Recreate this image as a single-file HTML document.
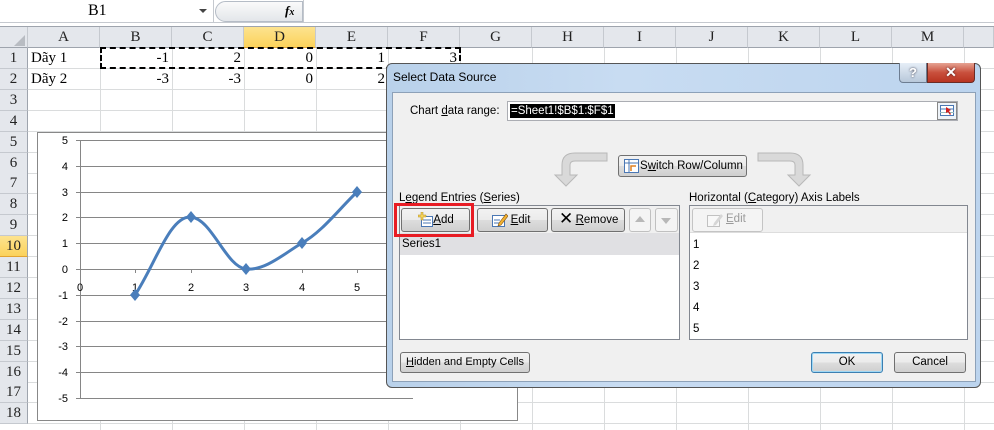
<!DOCTYPE html>
<html><head><meta charset="utf-8">
<style>
*{margin:0;padding:0;box-sizing:border-box}
body{width:994px;height:430px;overflow:hidden;background:#fff;position:relative;font-family:"Liberation Serif",serif}
.a{position:absolute;white-space:nowrap}
.ch{position:absolute;top:27px;height:21px;background:#e4e7ec;border-right:1px solid #c5c9cf;border-bottom:1px solid #9ea4ad;font-size:15px;text-align:center;line-height:21px;color:#222}
.rh{position:absolute;left:0;width:28px;background:#e4e7ec;border-bottom:1px solid #c5c9cf;border-right:1px solid #9ea4ad;font-size:15px;text-align:center;color:#222}
.vl{position:absolute;top:48px;width:1px;height:382px;background:#dadcdd}
.hl{position:absolute;left:28px;width:966px;height:1px;background:#dadcdd}
.c{position:absolute;font-size:15px;height:21px;line-height:21px;color:#000}
.d{font-family:"Liberation Sans","DejaVu Sans",sans-serif;font-size:11.5px;color:#000}
.btn{position:absolute;white-space:nowrap;border:1px solid #707070;border-radius:3px;background:linear-gradient(#f2f2f2,#ebebeb 50%,#dddddd 51%,#cfcfcf);font-family:"Liberation Sans",sans-serif;font-size:11.5px;text-align:center;color:#000}
u{text-decoration:underline}
</style></head><body>
<div class="a" style="left:0;top:0;width:994px;height:23px;background:#fff;border-bottom:1px solid #c5c9cf"></div>
<div class="a" style="left:0;top:0;width:214px;height:23px;border-right:1px solid #c5c9cf"></div>
<div class="a" style="left:88px;top:2px;font-size:16px">B1</div>
<div class="a" style="left:199px;top:9px;width:0;height:0;border-left:4px solid transparent;border-right:4px solid transparent;border-top:4px solid #444"></div>
<div class="a" style="left:215px;top:1px;width:88px;height:21px;border:1px solid #b5bcc6;border-radius:11px 0 0 11px;background:linear-gradient(#fafafa,#e3e6ea)"></div>
<div class="a" style="left:285px;top:3px;font-size:13px;font-style:italic;font-weight:bold">f<span style="font-size:10px">x</span></div>
<div class="a" style="left:303px;top:0;width:1px;height:23px;background:#c5c9cf"></div>
<div class="a" style="left:0;top:23px;width:994px;height:4px;background:#fff;border-bottom:1px solid #9ea4ad"></div>
<div class="ch" style="left:0;width:28px"></div>
<div class="a" style="left:14px;top:35px;width:0;height:0;border-left:11px solid transparent;border-bottom:11px solid #b8bcc2"></div>
<div class="ch" style="left:28px;width:72px">A</div>
<div class="ch" style="left:100px;width:72px">B</div>
<div class="ch" style="left:172px;width:72px">C</div>
<div class="ch" style="left:244px;width:72px;background:linear-gradient(#fde38f,#fbd25b);border-bottom:1px solid #e2a331">D</div>
<div class="ch" style="left:316px;width:72px">E</div>
<div class="ch" style="left:388px;width:72px">F</div>
<div class="ch" style="left:460px;width:72px">G</div>
<div class="ch" style="left:532px;width:72px">H</div>
<div class="ch" style="left:604px;width:72px">I</div>
<div class="ch" style="left:676px;width:72px">J</div>
<div class="ch" style="left:748px;width:72px">K</div>
<div class="ch" style="left:820px;width:72px">L</div>
<div class="ch" style="left:892px;width:72px">M</div>
<div class="ch" style="left:964px;width:30px"></div>
<div class="vl" style="left:100px"></div><div class="vl" style="left:172px"></div><div class="vl" style="left:244px"></div><div class="vl" style="left:316px"></div><div class="vl" style="left:388px"></div><div class="vl" style="left:460px"></div><div class="vl" style="left:532px"></div><div class="vl" style="left:604px"></div><div class="vl" style="left:676px"></div><div class="vl" style="left:748px"></div><div class="vl" style="left:820px"></div><div class="vl" style="left:892px"></div><div class="vl" style="left:964px"></div>
<div id="rows"></div>
<script>
(function(){var h='';for(var i=1;i<=18;i++){var t=48+(i-1)*20.9;var bg=i==10?'background:linear-gradient(#fde38f,#fbd25b);border-bottom-color:#e2a331;':'';h+='<div class="rh" style="top:'+t+'px;height:21px;line-height:21px;'+bg+'">'+i+'</div><div class="hl" style="top:'+(t+20)+'px"></div>';}document.getElementById('rows').innerHTML=h;})();
</script>
<div class="c" style="left:31px;top:48px">Dãy 1</div>
<div class="c" style="left:31px;top:69px">Dãy 2</div>
<div class="c" style="left:100px;top:48px;width:69px;text-align:right">-1</div>
<div class="c" style="left:172px;top:48px;width:69px;text-align:right">2</div>
<div class="c" style="left:244px;top:48px;width:69px;text-align:right">0</div>
<div class="c" style="left:316px;top:48px;width:69px;text-align:right">1</div>
<div class="c" style="left:388px;top:48px;width:69px;text-align:right">3</div>
<div class="c" style="left:100px;top:69px;width:69px;text-align:right">-3</div>
<div class="c" style="left:172px;top:69px;width:69px;text-align:right">-3</div>
<div class="c" style="left:244px;top:69px;width:69px;text-align:right">0</div>
<div class="c" style="left:316px;top:69px;width:69px;text-align:right">2</div>
<div class="a" style="left:100px;top:47px;width:361px;height:22px;border:2px dashed #000"></div>
<svg class="a" style="left:0;top:0" width="994" height="430">
<rect x="37.5" y="132.5" width="480" height="288" fill="#fff" stroke="#888"/>
<g stroke="#868686" stroke-width="1">
<line x1="76" y1="140.5" x2="413" y2="140.5"/><line x1="76" y1="166.5" x2="413" y2="166.5"/><line x1="76" y1="192.5" x2="413" y2="192.5"/><line x1="76" y1="217.5" x2="413" y2="217.5"/><line x1="76" y1="243.5" x2="413" y2="243.5"/><line x1="76" y1="269.5" x2="413" y2="269.5"/><line x1="76" y1="295.5" x2="413" y2="295.5"/><line x1="76" y1="321.5" x2="413" y2="321.5"/><line x1="76" y1="346.5" x2="413" y2="346.5"/><line x1="76" y1="372.5" x2="413" y2="372.5"/><line x1="76" y1="398.5" x2="413" y2="398.5"/>
<line x1="80.5" y1="140" x2="80.5" y2="398"/>
<line x1="135.5" y1="269" x2="135.5" y2="273"/><line x1="191.5" y1="269" x2="191.5" y2="273"/><line x1="246.5" y1="269" x2="246.5" y2="273"/><line x1="302.5" y1="269" x2="302.5" y2="273"/><line x1="357.5" y1="269" x2="357.5" y2="273"/><line x1="413" y1="269" x2="413" y2="273"/>
</g>
<g font-family="Liberation Sans, DejaVu Sans, sans-serif" font-size="11" fill="#000" text-anchor="end">
<text x="68" y="144">5</text><text x="68" y="170">4</text><text x="68" y="196">3</text><text x="68" y="221">2</text><text x="68" y="247">1</text><text x="68" y="273">0</text><text x="68" y="299">-1</text><text x="68" y="325">-2</text><text x="68" y="350">-3</text><text x="68" y="376">-4</text><text x="68" y="402">-5</text>
</g>
<g font-family="Liberation Sans, DejaVu Sans, sans-serif" font-size="11" fill="#000" text-anchor="middle">
<text x="80" y="291">0</text><text x="135" y="291">1</text><text x="191" y="291">2</text><text x="246" y="291">3</text><text x="302" y="291">4</text><text x="357" y="291">5</text>
</g>
<path d="M135,295 C155,265 170,215 191,217 C212,219 226,267 246,269 C265,271 285,253 302,243 C322,232 340,208 357,192" fill="none" stroke="#4a7ebb" stroke-width="3"/>
<g fill="#4a7ebb"><path d="M135,289 l5,6 -5,6 -5,-6z"/><path d="M191,211 l5,6 -5,6 -5,-6z"/><path d="M246,263 l5,6 -5,6 -5,-6z"/><path d="M302,237 l5,6 -5,6 -5,-6z"/><path d="M357,186 l5,6 -5,6 -5,-6z"/></g>
</svg>
<div class="a" style="left:386px;top:63px;width:595px;height:325px;border:1px solid #555;border-radius:6px;background:linear-gradient(90deg,#b9d1ea,#c8dcf2 40%,#bcd4ee);"></div>
<div class="a d" style="left:393px;top:70px;font-size:12px">Select Data Source</div>
<div class="a" style="left:899px;top:63px;width:28px;height:20px;border:1px solid #6d7d91;border-top:none;border-radius:0 0 0 4px;background:linear-gradient(#e6eef7,#b8c8da);text-align:center;font:bold 13px 'Liberation Sans',sans-serif;color:#fff;line-height:19px;text-shadow:0 0 2px #334">?</div>
<div class="a" style="left:927px;top:63px;width:48px;height:20px;border:1px solid #6a2b25;border-top:none;border-radius:0 0 4px 0;background:linear-gradient(#e5a393,#c9503d 50%,#b83320);text-align:center;font:bold 14px 'Liberation Sans',sans-serif;color:#fff;line-height:19px;text-shadow:0 0 2px #411">✕</div>
<div class="a" style="left:392px;top:92px;width:584px;height:290px;background:#f0f0f0;border:1px solid #8da1b8"></div>
<div class="a d" style="left:410px;top:105px">Chart <u>d</u>ata range:</div>
<div class="a" style="left:507px;top:101px;width:451px;height:20px;background:#fff;border:1px solid #abadb3"></div>
<div class="a d" style="left:510px;top:104px;background:#000;color:#fff;padding:0 1px;line-height:14px">=Sheet1!$B$1:$F$1</div>
<div class="a" style="left:937px;top:102px;width:20px;height:18px;border:1px solid #888;background:#eef3f8"></div>
<svg class="a" style="left:940px;top:105px" width="15" height="12"><rect x="0.5" y="0.5" width="13" height="10" fill="#fff" stroke="#4a77b4"/><line x1="0" y1="4" x2="14" y2="4" stroke="#4a77b4"/><line x1="0" y1="7.5" x2="14" y2="7.5" stroke="#9bb"/><path d="M6,2 l5,3 -2,1 2,3 -1,1 -2,-3 -2,1z" fill="#d02020"/></svg>
<svg class="a" style="left:540px;top:150px" width="290" height="40">
<path d="M67,3 L35,3 C25,3 22,8 22,15 L22,25 L15,25 L26,36 L37,25 L30,25 L30,15 C30,12 32,11 35,11 L67,11z" fill="#d9d9d9" stroke="#b8b8b8"/>
<path d="M218,3 L250,3 C260,3 263,8 263,15 L263,25 L270,25 L259,36 L248,25 L255,25 L255,15 C255,12 253,11 250,11 L218,11z" fill="#d9d9d9" stroke="#b8b8b8"/>
</svg>
<div class="btn" style="left:618px;top:155px;width:129px;height:22px;line-height:20px;padding-left:18px">S<u>w</u>itch Row/Column</div>
<svg class="a" style="left:624px;top:159px" width="16" height="15"><rect x="0.5" y="0.5" width="14" height="13" fill="#fff" stroke="#4a77b4"/><line x1="0" y1="4" x2="15" y2="4" stroke="#4a77b4"/><line x1="5" y1="0" x2="5" y2="14" stroke="#4a77b4"/><path d="M7,12 L7,7 L12,7" fill="none" stroke="#e08020" stroke-width="1.5"/></svg>
<div class="a d" style="left:399px;top:192px">L<u>e</u>gend Entries (<u>S</u>eries)</div>
<div class="a d" style="left:689px;top:192px">Horizontal (<u>C</u>ategory) Axis Labels</div>
<div class="a" style="left:399px;top:205px;width:281px;height:135px;background:#fff;border:1px solid #828790"></div>
<div class="a" style="left:400px;top:206px;width:279px;height:27px;background:#f0f0f0"></div>
<div class="a" style="left:400px;top:233px;width:279px;height:22px;background:#e0e0e3"></div>
<div class="a d" style="left:402px;top:238px">Series1</div>
<div class="btn" style="left:401px;top:208px;width:69px;height:24px;line-height:22px;padding-left:16px"><u>A</u>dd</div>
<svg class="a" style="left:418px;top:212px" width="16" height="16"><rect x="3.5" y="4.5" width="11" height="10" fill="#fff" stroke="#4a77b4"/><line x1="5" y1="8" x2="13" y2="8" stroke="#4a77b4"/><line x1="5" y1="11" x2="13" y2="11" stroke="#4a77b4"/><path d="M3,0 h2 v3 h3 v2 h-3 v3 h-2 v-3 h-3 v-2 h3z" fill="#f4d35a" stroke="#b08a1a" stroke-width=".5"/></svg>
<div class="a" style="left:394px;top:203px;width:80px;height:34px;border:3px solid #e81c24"></div>
<div class="btn" style="left:477px;top:208px;width:71px;height:24px;line-height:22px;padding-left:16px"><u>E</u>dit</div>
<svg class="a" style="left:492px;top:212px" width="16" height="16"><rect x="0.5" y="3.5" width="12" height="11" fill="#fff" stroke="#4a77b4"/><line x1="2" y1="8" x2="8" y2="8" stroke="#4a77b4"/><line x1="2" y1="11" x2="8" y2="11" stroke="#4a77b4"/><path d="M7,11 L14,2 L16,4 L9,13 L6,14z" fill="#f0b030" stroke="#805010" stroke-width=".6"/></svg>
<div class="btn" style="left:551px;top:208px;width:74px;height:24px;line-height:22px;padding-left:18px"><u>R</u>emove</div>
<div class="a" style="left:559px;top:209px;font:17px 'DejaVu Sans',sans-serif">✕</div>
<div class="a" style="left:629px;top:208px;width:22px;height:24px;border:1px solid #c0c0c0;border-radius:3px;background:#f4f4f4"></div>
<div class="a" style="left:635px;top:216px;border-left:5px solid transparent;border-right:5px solid transparent;border-bottom:6px solid #b8b8b8"></div>
<div class="a" style="left:655px;top:208px;width:23px;height:24px;border:1px solid #c0c0c0;border-radius:3px;background:#f4f4f4"></div>
<div class="a" style="left:661px;top:218px;border-left:5px solid transparent;border-right:5px solid transparent;border-top:6px solid #b8b8b8"></div>
<div class="a" style="left:689px;top:205px;width:279px;height:135px;background:#fff;border:1px solid #828790"></div>
<div class="a" style="left:690px;top:206px;width:277px;height:27px;background:#f0f0f0;border-bottom:1px solid #ddd"></div>
<div class="a" style="left:692px;top:208px;width:71px;height:24px;border:1px solid #c4c4c4;border-radius:3px;background:#f4f4f4"></div>
<svg class="a" style="left:707px;top:212px" width="16" height="16" opacity=".4"><rect x="0.5" y="3.5" width="12" height="11" fill="#fff" stroke="#777"/><path d="M7,11 L14,2 L16,4 L9,13 L6,14z" fill="#aaa"/></svg>
<div class="a d" style="left:726px;top:213px;color:#9a9a9a"><u>E</u>dit</div>
<div class="a d" style="left:693px;top:239px">1</div>
<div class="a d" style="left:693px;top:260px">2</div>
<div class="a d" style="left:693px;top:281px">3</div>
<div class="a d" style="left:693px;top:302px">4</div>
<div class="a d" style="left:693px;top:323px">5</div>
<div class="btn" style="left:400px;top:352px;width:130px;height:21px;line-height:19px;font-size:11px"><u>H</u>idden and Empty Cells</div>
<div class="btn" style="left:811px;top:352px;width:72px;height:21px;line-height:19px;border-color:#3c7fb1;box-shadow:inset 0 0 0 1px #9fd8f5">OK</div>
<div class="btn" style="left:894px;top:352px;width:72px;height:21px;line-height:19px">Cancel</div>
</body></html>
